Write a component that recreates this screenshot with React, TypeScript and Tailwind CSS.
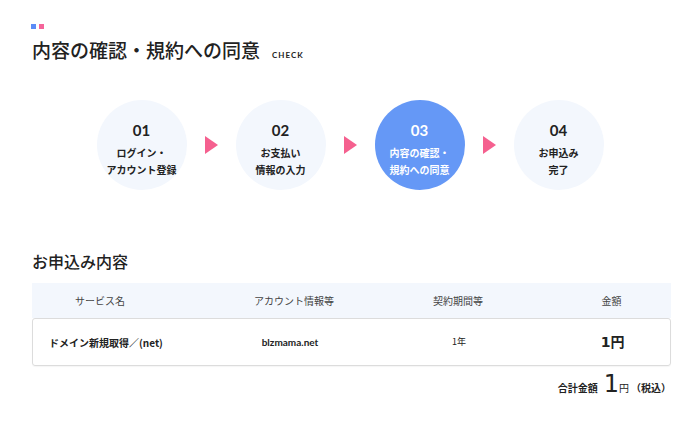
import React from "react";

const jp = { fontFamily: '"Noto Sans CJK JP", "Noto Sans", sans-serif' } as React.CSSProperties;

function Step({ num, l1, l2, active }: { num: string; l1: string; l2: string; active?: boolean }) {
  return (
    <div
      className={
        "w-[90px] h-[90px] rounded-full flex flex-col items-center pt-[21px] " +
        (active ? "bg-[#6598f6] text-white" : "bg-[#f3f7fd] text-[#222]")
      }
    >
      <div className="text-[15px] leading-[18px] font-bold font-['Lato','Noto_Sans',sans-serif]">{num}</div>
      <div className="text-[10px] leading-[17px] font-bold mt-[5px] text-center">{l1}</div>
      <div className="text-[10px] leading-[17px] font-bold text-center">{l2}</div>
    </div>
  );
}

function Arrow() {
  return (
    <svg width="13" height="18" viewBox="0 0 13 18" className="mx-[18px]">
      <polygon points="0,0 13,9 0,18" fill="#f5608f" />
    </svg>
  );
}

export default function App() {
  return (
    <div style={jp} className="w-[700px] h-[426px] bg-white px-[32px] pt-[24px] text-[#222] overflow-hidden">
      <div className="flex gap-[3px] ml-[-1px]">
        <div className="w-[5px] h-[5px] bg-[#5b8cf7]" />
        <div className="w-[5px] h-[5px] bg-[#f5649a]" />
      </div>
      <div className="flex items-baseline mt-[7px]">
        <div className="text-[19px] leading-[28px] font-medium">内容の確認・規約への同意</div>
        <div className="ml-[12px] text-[8px] font-bold tracking-[1px] font-['Lato',sans-serif]">CHECK</div>
      </div>

      <div className="flex items-center justify-center mt-[36px]">
        <Step num="01" l1="ログイン・" l2="アカウント登録" />
        <Arrow />
        <Step num="02" l1="お支払い" l2="情報の入力" />
        <Arrow />
        <Step num="03" l1="内容の確認・" l2="規約への同意" active />
        <Arrow />
        <Step num="04" l1="お申込み" l2="完了" />
      </div>

      <div className="text-[16px] leading-[24px] font-medium mt-[59px]">お申込み内容</div>

      <div className="w-[639px] mt-[10px]">
        <div className="grid grid-cols-[136px_252px_76px_175px] h-[35px] items-center bg-[#f3f7fd] text-[10px] text-[#444]">
          <div className="text-center">サービス名</div>
          <div className="text-center">アカウント情報等</div>
          <div className="text-center">契約期間等</div>
          <div className="text-center pl-[56px]">金額</div>
        </div>
        <div className="grid grid-cols-[136px_252px_76px_175px] h-[48px] items-center border border-[#dcdcdc] rounded-[3px] shadow-[0_1px_1px_rgba(0,0,0,0.04)]">
          <div className="pl-[16px] text-[10px] font-bold whitespace-nowrap">ドメイン新規取得／(net)</div>
          <div className="text-center text-[10px] font-bold pr-[10px] font-['Lato',sans-serif]">blzmama.net</div>
          <div className="text-center text-[9px]">1年</div>
          <div className="text-center pl-[56px] text-[14px] font-bold">
            <span className="font-['DejaVu_Sans',sans-serif]">1</span>円
          </div>
        </div>
      </div>

      <div className="w-[639px] flex justify-end items-baseline mt-[3px]">
        <span className="text-[10px] font-bold">合計金額</span>
        <span className="text-[24px] font-['DejaVu_Sans',sans-serif] ml-[6px] mr-[0px] leading-[30px]">1</span>
        <span className="text-[10px]">円</span>
        <span className="text-[10px] font-bold ml-[2px]">（税込）</span>
      </div>
    </div>
  );
}
